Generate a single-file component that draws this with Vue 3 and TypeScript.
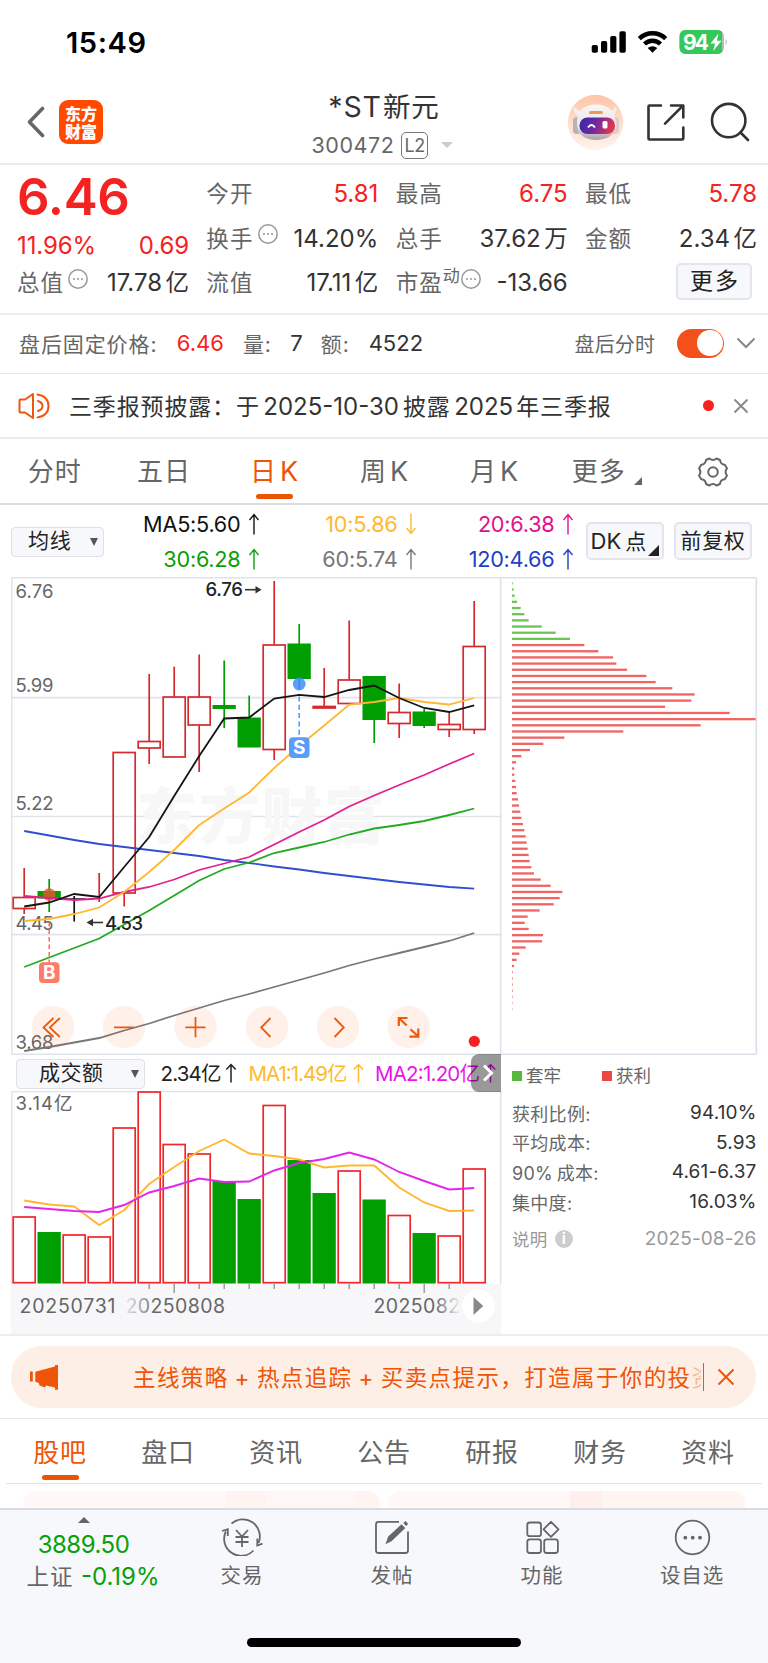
<script setup lang="ts">
interface Quote { label: string; value: string; unit?: string; up?: boolean; info?: boolean; sup?: string }
interface Candle { open: number; close: number; high: number; low: number; kind: 'up' | 'down' | 'flat' }

const columns: Quote[][] = [
  [
    { label: '今开', value: '5.81', up: true },
    { label: '换手', value: '14.20%', info: true },
    { label: '流值', value: '17.11', unit: '亿' },
  ],
  [
    { label: '最高', value: '6.75', up: true },
    { label: '总手', value: '37.62', unit: '万' },
    { label: '市盈', value: '-13.66', sup: '动', info: true },
  ],
  [
    { label: '最低', value: '5.78', up: true },
    { label: '金额', value: '2.34', unit: '亿' },
  ],
]

const averages = [
  { text: 'MA5:5.60', color: '#111', down: false },
  { text: '10:5.86', color: '#ffb92e', down: true },
  { text: '20:6.38', color: '#e0128a', down: false },
  { text: '30:6.28', color: '#09a009', down: false },
  { text: '60:5.74', color: '#777', down: false },
  { text: '120:4.66', color: '#2140c8', down: false },
]

const cx = (i: number): number => 24.2 + 25 * i

// Vertical pixel positions of each session inside the price pane.
const candles: Candle[] = [
  { open: 897.5, close: 908.5, high: 868, low: 914, kind: 'up' },
  { open: 891, close: 898.5, high: 879, low: 912, kind: 'down' },
  { open: 899, close: 899, high: 896, low: 921.5, kind: 'flat' },
  { open: 897, close: 897, high: 873, low: 902, kind: 'up' },
  { open: 752.5, close: 893, high: 752, low: 906.5, kind: 'up' },
  { open: 741.5, close: 748, high: 674, low: 764, kind: 'up' },
  { open: 697, close: 757, high: 666.7, low: 757, kind: 'up' },
  { open: 697, close: 725, high: 654.5, low: 772, kind: 'up' },
  { open: 705, close: 709, high: 660.5, low: 728, kind: 'down' },
  { open: 717.5, close: 747.5, high: 695.5, low: 747, kind: 'down' },
  { open: 645, close: 749.5, high: 581, low: 760, kind: 'up' },
  { open: 643.5, close: 679, high: 624, low: 689, kind: 'down' },
  { open: 706.5, close: 708, high: 668, low: 707, kind: 'up' },
  { open: 680, close: 703.5, high: 620.5, low: 703, kind: 'up' },
  { open: 676, close: 720, high: 676, low: 743, kind: 'down' },
  { open: 712.5, close: 723.5, high: 683.5, low: 738, kind: 'up' },
  { open: 711.5, close: 726, high: 709, low: 728, kind: 'down' },
  { open: 724.5, close: 729.5, high: 712, low: 737, kind: 'up' },
  { open: 646.5, close: 729.5, high: 601, low: 734, kind: 'up' },
]

const ink = { up: '#d42a2e', down: '#009e00', flat: '#111' }
const line = (ys: number[]): string => ys.map((y, i) => `${cx(i)},${y}`).join(' ')

const priceLines = [
  { color: '#777', ys: [1051, 1047, 1042.5, 1038, 1030.5, 1023.5, 1015.5, 1008, 1000.5, 994, 987, 980, 973, 965.5, 959, 953, 947, 941, 933] },
  { color: '#2f4fd0', ys: [831, 835.5, 840, 844, 847, 850, 853, 856, 860, 863, 866.5, 869.5, 873, 876, 879, 882, 884.5, 887, 888.7] },
  { color: '#22aa22', ys: [967, 957.5, 948, 938.5, 924.5, 910.5, 895.5, 880.5, 869, 862.5, 853, 847.5, 842, 834.5, 828.5, 825, 821, 815, 808.5] },
  { color: '#e0218f', ys: [896, 898, 900, 898.5, 892, 887, 879.5, 870, 863.5, 857, 844.5, 832, 820, 806.5, 795.5, 785, 775, 764, 753.5] },
  { color: '#ffb732', ys: [921, 919, 914, 907.5, 892, 872, 850, 825, 808.5, 792.5, 768, 746, 725.5, 704.5, 702, 698, 702, 704.5, 698] },
  { color: '#151515', ys: [906.5, 902.5, 894, 897, 867, 837, 796, 756, 718.5, 717.5, 698.5, 694.8, 697, 690, 685.5, 698, 708, 712, 705.3] },
]

const scale = [
  { t: '6.76', y: 598.3 }, { t: '5.99', y: 691.6 }, { t: '5.22', y: 810.4 }, { t: '4.45', y: 929.5 }, { t: '3.68', y: 1048.5 },
]

const volumes = [1217, 1232, 1235, 1237, 1128, 1092, 1144.5, 1154, 1181, 1199, 1105.5, 1160, 1193, 1171, 1199.5, 1215.5, 1233, 1236, 1169]
const falling = [1, 8, 9, 11, 12, 14, 16]
const volumeLines = [
  { color: '#ffb732', ys: [1200.5, 1204.5, 1206.5, 1225, 1210, 1184, 1167, 1151, 1139.5, 1153.5, 1156, 1159.5, 1167.5, 1165.5, 1165.5, 1187.5, 1202.5, 1211, 1210.5] },
  { color: '#e227ea', ys: [1207, 1209, 1211, 1212, 1205, 1192.5, 1186, 1178.5, 1182, 1181.5, 1170.5, 1163, 1159, 1152.5, 1159.5, 1172, 1181, 1189.5, 1188] },
]

const chips = [2, 5, 8, 15, 26, 37, 50, 89, 131, 174, 217, 259, 303, 313, 345, 403, 431, 481, 548, 538, 459, 653, 731, 566, 334, 157,
  94, 54, 28, 12, 7, 7, 10, 12, 14, 18, 21, 25, 28, 33, 37, 41, 44, 47, 50, 53, 58, 66, 86, 116, 151, 143, 125, 83, 47, 38, 50, 93, 90, 41,
  22, 14, 6, 2, 2, 2, 2, 1.6, 1.3, 1]

const stats = [
  { label: '获利比例:', value: '94.10%' },
  { label: '平均成本:', value: '5.93' },
  { label: '90%\u2009成本:', value: '4.61-6.37' },
  { label: '集中度:', value: '16.03%' },
]

const sections = ['股吧', '盘口', '资讯', '公告', '研报', '财务', '资料']
const tools = [53, 124, 195.5, 267, 338, 408.7]
</script>

<template>
  <div class="page">
    <div class="status">
      <span class="clock">15:49</span>
      <svg class="signals" width="134" height="28" viewBox="591 28 134 28">
        <rect x="591.7" y="45" width="6.2" height="7.8" rx="1.8" />
        <rect x="601" y="41" width="6.2" height="11.8" rx="1.8" />
        <rect x="610.2" y="36" width="6.2" height="16.8" rx="1.8" />
        <rect x="619.4" y="31.2" width="6.4" height="21.6" rx="1.8" />
        <g fill="none" stroke="#000" stroke-width="4.4">
          <path d="M639.3 38.6 A 19 19 0 0 1 665.7 38.6" />
          <path d="M644.5 44 A 11.6 11.6 0 0 1 660.500 44" />
        </g>
        <path d="M652.500 52.700 L647.700 48 Q652.500 44.300 657.300 48 Z" />
        <path d="M686 30 h31 q7 0 7 7 v10 q0 7 -7 7 h-31 q-6.500 0 -6.500 -7 v-10 q0 -7 6.500 -7z" fill="#b9b9b9" />
        <path d="M686 30 h31 q3 0 5 2 v20 q-2 2 -5 2 h-31 q-6.500 0 -6.500 -7 v-10 q0 -7 6.500 -7z" fill="#34c759" />
        <path d="M725.6 38.500 q2.600 3.500 0 7z" fill="#b9b9b9" />
        <text x="683" y="49.700" class="batt" textLength="26">94</text>
        <path d="M718.600 33.500 L710.400 43.600 h4.600 l-1.800 7.400 L721.600 40.700 h-4.800z" fill="#fff" />
      </svg>
    </div>

    <header class="head">
      <div class="head-left">
        <svg width="18" height="32" viewBox="0 0 18 32"><path d="M15.500 2.500 L2.500 16 L15.500 29.500" fill="none" stroke="#666" stroke-width="3.600" stroke-linecap="round" stroke-linejoin="round" /></svg>
        <div class="brand"><span>东方</span><span>财富</span></div>
      </div>
      <div class="title">
        <div class="name">*ST<span>新元</span></div>
        <div class="code">300472<em>L2</em><i></i></div>
      </div>
      <svg class="head-icons" width="202" height="58" viewBox="566 93 202 58">
        <defs>
          <linearGradient id="halo" x1="0" y1="0" x2="0" y2="1"><stop offset="0" stop-color="#ffc5a8" /><stop offset="1" stop-color="#fff4ee" /></linearGradient>
          <linearGradient id="visor" x1="0" y1="0" x2="1" y2="0.200"><stop offset="0" stop-color="#3227a8" /><stop offset=".55" stop-color="#74299f" /><stop offset="1" stop-color="#e2344f" /></linearGradient>
          <linearGradient id="shell" x1="0" y1="0" x2="0" y2="1"><stop offset="0" stop-color="#f8f6f6" /><stop offset=".6" stop-color="#ebe6e8" /><stop offset="1" stop-color="#aaa3a8" /></linearGradient>
        </defs>
        <circle cx="595.500" cy="122.500" r="27.700" fill="url(#halo)" />
        <path d="M574 106 q-2 7 4 10 l5 -5 q-6 0 -9 -5z M616 106 q2 7 -4 10 l-5 -5 q6 0 9 -5z" fill="#f3edec" />
        <rect x="573" y="117" width="8" height="17" rx="4" fill="#b9b1b6" />
        <rect x="611" y="117" width="8" height="17" rx="4" fill="#d9cdd0" />
        <path d="M577 125 C576 112 583 104.500 596 104.500 S616 112 616 125 C616 135 606 140 596 140 S577 135 577 125z" fill="url(#shell)" />
        <rect x="589" y="111" width="14" height="3" rx="1.500" fill="#eb9a55" />
        <rect x="579.500" y="117.500" width="35.500" height="16.500" rx="8" fill="url(#visor)" />
        <path d="M588 127.500 q3.500 -5 7 0" stroke="#fff" stroke-width="1.800" fill="none" />
        <rect x="602.500" y="121" width="5" height="7.500" rx="1.500" fill="#fff" />
        <g fill="none" stroke="#333" stroke-width="2.600" stroke-linecap="round" stroke-linejoin="round">
          <path d="M661 105.500 H649.500 Q648.500 105.500 648.500 106.500 V138.500 Q648.500 139.500 649.500 139.500 H682 Q683.300 139.500 683.300 138.500 V127.500" />
          <path d="M671 105.500 H683.300 V117.500 M683 105.700 L665 123.700" />
          <circle cx="728.700" cy="120.600" r="16.700" />
          <path d="M740.500 132.500 L748 140" />
        </g>
      </svg>
    </header>

    <section class="quote">
      <div class="qcol first">
        <div class="price">6.46</div>
        <div class="change"><span>11.96%</span><span>0.69</span></div>
        <div class="qrow">
          <span class="lab">总值</span>
          <svg class="dots" width="20" height="20" viewBox="0 0 20 20"><circle cx="10" cy="10" r="9.200" /><path d="M5 10h2M9 10h2M13 10h2" /></svg>
          <span class="val">17.78<b>亿</b></span>
        </div>
      </div>
      <div v-for="(col, c) in columns" :key="c" class="qcol">
        <div v-for="q in col" :key="q.label" class="qrow">
          <span class="lab">{{ q.label }}</span>
          <sup v-if="q.sup">{{ q.sup }}</sup>
          <svg v-if="q.info" class="dots" :class="{ tight: q.sup }" width="20" height="20" viewBox="0 0 20 20"><circle cx="10" cy="10" r="9.200" /><path d="M5 10h2M9 10h2M13 10h2" /></svg>
          <span class="val" :class="{ red: q.up }">{{ q.value }}<b v-if="q.unit">{{ q.unit }}</b></span>
        </div>
        <button v-if="c === 2" class="more">更多</button>
      </div>
    </section>

    <section class="after">
      <span class="a-lab">盘后固定价格:</span><span class="a-val red p">6.46</span>
      <span class="a-lab">量:</span><span class="a-val v">7</span>
      <span class="a-lab">额:</span><span class="a-val m">4522</span>
      <span class="a-time">盘后分时</span>
      <span class="toggle"></span>
      <svg width="20" height="12" viewBox="0 0 20 12"><path d="M1.500 1.500 L10 10 L18.500 1.500" fill="none" stroke="#888" stroke-width="2" /></svg>
    </section>

    <section class="notice">
      <svg width="32" height="28" viewBox="0 0 32 28" fill="none" stroke="#f0560c" stroke-width="2" stroke-linejoin="round" stroke-linecap="round">
        <path d="M15 2 V26 L7 20.500 H2.500 Q1.500 20.500 1.500 19.500 V8.500 Q1.500 7.500 2.500 7.500 H7 Z" />
        <path d="M20 9 Q24.500 10.500 24.500 14 T20 19 M19.500 2.500 Q30.500 4.500 30.500 14 T19.500 25.500" />
      </svg>
      <p>三季报预披露：<span class="sp">于</span><i>2025-10-30</i><span>披露</span><i class="yr">2025</i><span>年三季报</span></p>
      <span class="dot"></span>
      <svg width="16" height="16" viewBox="0 0 16 16"><path d="M1.500 1.500 L14.500 14.500 M14.500 1.500 L1.500 14.500" stroke="#888" stroke-width="1.900" /></svg>
    </section>

    <nav class="periods">
      <span>分时</span><span>五日</span><span class="on">日<i>K</i></span><span>周<i>K</i></span><span>月<i>K</i></span>
      <span class="drop">更多</span>
      <svg width="32" height="32" viewBox="-16 -16 32 32" fill="none" stroke="#666" stroke-width="2">
        <path stroke-linejoin="round" d="M-3.500 -13.500 Q0 -10.500 3.500 -13.500 L7 -12 Q7.500 -7.500 11.800 -7.300 L14 -3.600 Q11.200 0 14 3.600 L11.800 7.300 Q7.500 7.500 7 12 L3.500 13.500 Q0 10.500 -3.500 13.500 L-7 12 Q-7.500 7.500 -11.800 7.300 L-14 3.600 Q-11.200 0 -14 -3.600 L-11.800 -7.300 Q-7.500 -7.500 -7 -12 Z" />
        <circle r="4.800" />
      </svg>
    </nav>

    <section class="indicators">
      <div class="pick">均线<i></i></div>
      <div class="mas">
        <span v-for="m in averages" :key="m.text" :style="{ color: m.color }">{{ m.text }}<svg width="10" height="22" viewBox="0 0 10 22" :class="{ flip: m.down }"><path d="M5 21.500 V1.500 M0.500 7 L5 1.500 L9.500 7" fill="none" stroke="currentColor" stroke-width="1.400" /></svg></span>
      </div>
      <button class="dk">DK<b>点</b></button>
      <button class="fq">前复权</button>
    </section>

    <section class="board">
      <div class="left">
        <svg class="pane" width="491" height="478" viewBox="11 577 491 478">
          <g stroke="#e2e3ea" stroke-width="1.600">
            <path d="M11 577.700 H502 M11 697.600 H502 M11 816.500 H502 M11 934.600 H502 M11 1054.200 H502" />
            <path d="M11.700 577 V1055 M500.700 577 V1055" />
          </g>
          <text x="136" y="839" class="mark" textLength="249">东方财富</text>
          <text v-for="s in scale" :key="s.t" x="15.500" :y="s.y" class="tick" textLength="38">{{ s.t }}</text>
          <g v-for="(k, i) in candles" :key="i" :stroke="ink[k.kind]" stroke-width="1.700" fill="none">
            <template v-if="k.kind === 'up'">
              <path :d="`M${cx(i)} ${k.high} V${k.open} M${cx(i)} ${k.close} V${k.low}`" />
              <rect :x="cx(i) - 11" :y="k.open" width="22" :height="k.close - k.open" />
            </template>
            <template v-else-if="k.kind === 'down'">
              <path :d="`M${cx(i)} ${k.high} V${k.low}`" />
              <rect :x="cx(i) - 11.700" :y="k.open" width="23.300" :height="k.close - k.open" fill="#009e00" stroke="none" />
            </template>
            <path v-else :d="`M${cx(i)} ${k.high} V${k.low} M${cx(i) - 11.500} 899 h23`" />
          </g>
          <circle cx="299.200" cy="684" r="6.400" fill="#3f8cff" fill-opacity=".85" />
          <circle cx="49.200" cy="894.500" r="6.300" fill="#e8542a" fill-opacity=".8" />
          <polyline v-for="l in priceLines" :key="l.color" :points="line(l.ys)" fill="none" :stroke="l.color" stroke-width="1.800" />
          <path d="M299.200 696.500 V738" stroke="#5a9cff" stroke-width="1.700" stroke-dasharray="5 3.300" />
          <path d="M49.200 922 V962" stroke="#ff6a5a" stroke-width="1.500" stroke-dasharray="4.500 3" />
          <rect x="289" y="737.300" width="20.500" height="20.700" rx="4" fill="#5a9cfa" />
          <text x="299.200" y="754.300" class="badge">S</text>
          <rect x="39" y="962.300" width="20.500" height="20.700" rx="4" fill="#ff7b69" />
          <text x="49.300" y="979.400" class="badge">B</text>
          <text x="205.500" y="596.300" class="peak" textLength="37.500">6.76</text>
          <path d="M245 589.700 h13" stroke="#333" stroke-width="1.600" /><path d="M255.500 586 l6 3.700 l-6 3.700z" fill="#333" />
          <text x="105" y="929.800" class="peak" textLength="38">4.53</text>
          <path d="M90 922.500 h13" stroke="#333" stroke-width="1.600" /><path d="M93 918.800 l-6.500 3.700 l6.500 3.700z" fill="#333" />
          <circle v-for="x in tools" :key="x" :cx="x" cy="1027" r="21.200" fill="#fb5a10" fill-opacity=".09" />
          <g fill="none" stroke="#ee5a0c" stroke-width="1.800">
            <path d="M53.500 1018 L43.500 1027.500 L53.500 1037 M59.800 1018 L49.800 1027.500 L59.800 1037" />
            <path d="M114 1027.300 H134 M185.300 1027.300 H205.500 M195.500 1017 V1037.300" />
            <path d="M270.500 1018 L261.200 1027.500 L270.500 1037 M334.500 1018 L343.800 1027.500 L334.500 1037" />
            <path d="M398.800 1026 V1018 H407.500 M399 1018.300 L406.800 1025.500 M418.300 1028.500 V1036.700 H409.500 M418.300 1036.500 L410.500 1029.300" stroke-width="2.200" />
          </g>
          <circle cx="474.300" cy="1041.300" r="5.600" fill="#f52222" />
        </svg>

        <div class="vol-head">
          <div class="pick wide">成交额<i></i></div>
          <svg width="340" height="36" viewBox="160 1055 340 36" class="vol-info">
            <text x="160.500" y="1081" fill="#222" textLength="61">2.34亿</text>
            <text x="248.500" y="1081" fill="#ffb92e" textLength="99">MA1:1.49亿</text>
            <text x="375" y="1081" fill="#e814e8" textLength="105">MA2:1.20亿</text>
            <g fill="none" stroke-width="1.500">
              <path d="M231 1082.500 V1064.500 M226.300 1069.500 L231 1064.500 L235.700 1069.500" stroke="#222" />
              <path d="M358.500 1082.500 V1064.500 M353.800 1069.500 L358.500 1064.500 L363.200 1069.500" stroke="#ffb92e" />
              <path d="M490.500 1082.500 V1064.500 M485.800 1069.500 L490.500 1064.500 L495.200 1069.500" stroke="#e814e8" />
            </g>
          </svg>
          <div class="fold"><svg width="12" height="20" viewBox="0 0 12 20"><path d="M2 2.500 L9.500 10 L2 17.500" fill="none" stroke="#fff" stroke-width="3" /></svg></div>
        </div>

        <svg class="pane" width="491" height="193" viewBox="11 1091 491 193">
          <path d="M11 1091.500 H502 M11.700 1091 V1284 M500.700 1091 V1284" stroke="#e2e3ea" stroke-width="1.600" />
          <text x="15.500" y="1110.300" class="tick" textLength="57">3.14亿</text>
          <g v-for="(v, i) in volumes" :key="i">
            <rect v-if="falling.includes(i)" :x="cx(i) - 11.700" :y="v" width="23.300" :height="1283.500 - v" fill="#009e00" />
            <rect v-else :x="cx(i) - 11" :y="v" width="22" :height="1282.700 - v" fill="none" stroke="#f2262a" stroke-width="1.700" />
          </g>
          <polyline v-for="l in volumeLines" :key="l.color" :points="line(l.ys)" fill="none" :stroke="l.color" stroke-width="1.900" />
        </svg>

        <div class="dates">
          <svg width="490" height="50" viewBox="11 1284 490 50">
            <defs>
              <linearGradient id="in"><stop offset="0" stop-color="#666" stop-opacity=".1" /><stop offset=".3" stop-color="#666" /></linearGradient>
              <linearGradient id="out"><stop offset=".62" stop-color="#666" /><stop offset=".85" stop-color="#666" stop-opacity=".15" /></linearGradient>
            </defs>
            <path v-for="i in 13" :key="i" :d="`M${cx(i + 4)} 1284 v${i === 2 || i === 12 ? 9 : 5}`" stroke="#888" stroke-width="1.200" />
            <text x="19.500" y="1312.500" fill="#666" textLength="96">20250731</text>
            <text x="125.500" y="1312.500" fill="url(#in)" textLength="99.500">20250808</text>
            <text x="373.500" y="1312.500" fill="url(#out)" textLength="99">20250825</text>
            <circle cx="478.500" cy="1306" r="16.500" fill="#fff" />
            <path d="M473.500 1297 L483.200 1306 L473.500 1315z" fill="#888" />
          </svg>
        </div>
      </div>

      <div class="right">
        <svg class="pane" width="256" height="478" viewBox="502 577 256 478">
          <path d="M502 577.700 H756.300 V1054.400 H502" fill="none" stroke="#dedfe8" stroke-width="1.600" />
          <rect v-for="(w, i) in chips" :key="i" x="512" :y="582.200 + 6.172 * i" :width="w / 3" height="2.300" :fill="i < 10 ? '#6cc455' : '#f06464'" />
        </svg>
        <div class="legend"><span>套牢</span><span class="gain">获利</span></div>
        <dl class="stats">
          <div v-for="s in stats" :key="s.label"><dt>{{ s.label }}</dt><dd>{{ s.value }}</dd></div>
          <div class="tip"><dt>说明<em>i</em></dt><dd>2025-08-26</dd></div>
        </dl>
      </div>
    </section>

    <section class="promo">
      <div class="pill">
        <svg width="30" height="26" viewBox="29 1364 30 26" fill="#ee5507"><rect x="30" y="1371.500" width="2.800" height="10" /><path d="M35.300 1371.800 L55 1366.500 V1365 H58 V1389.700 H55 V1387.500 L46 1385.500 L45 1387.500 L39.500 1385.500 L38.800 1383 L35.300 1381.800z" /></svg>
        <p>主线策略<i>+</i>热点追踪<i>+</i>买卖点提示，打造属于你的投<u>资</u></p>
        <span class="bar"></span>
        <svg width="18" height="18" viewBox="0 0 18 18"><path d="M1.500 1.500 L16.500 16.500 M16.500 1.500 L1.500 16.500" stroke="#ee5507" stroke-width="1.900" /></svg>
      </div>
    </section>

    <nav class="sections"><span v-for="(s, i) in sections" :key="s" :class="{ on: i === 0 }">{{ s }}</span></nav>

    <div class="peek"><span></span><span class="alt"></span></div>

    <footer class="bottom">
      <div class="index">
        <i></i>
        <strong>3889.50</strong>
        <p>上证<span>-0.19%</span></p>
      </div>
      <div class="act">
        <svg width="42" height="38" viewBox="221 1518 42 38"><path d="M231.500 1523.700 A17 17 0 0 1 258.500 1543 M253.500 1550.500 A17 17 0 0 1 225.800 1531.500 M222 1531 L227.800 1529.300 V1536 M262.500 1543.600 L257.300 1545.500 V1538.500" /><path d="M236 1530 L242 1536.500 L248 1530 M242 1536.500 V1547 M235.500 1537 H248.500 M235.500 1542 H248.500" /></svg>
        <span>交易</span>
      </div>
      <div class="act">
        <svg width="42" height="38" viewBox="371 1518 42 38"><path d="M399 1521.800 H378.500 Q376 1521.800 376 1524.300 V1550.500 Q376 1553 378.500 1553 H405.500 Q408 1553 408 1550.500 V1531.500" /><path d="M387 1542.500 L389 1537 L401.500 1525.500 L404 1528 L391 1540.500z" fill="#666" /><path d="M404.700 1524.500 L406.800 1522.500" stroke-width="4" /></svg>
        <span>发帖</span>
      </div>
      <div class="act">
        <svg width="42" height="38" viewBox="521 1518 42 38"><rect x="527.300" y="1522.500" width="13.700" height="13.700" rx="2.500" /><rect x="527.300" y="1539.300" width="13.700" height="13.700" rx="2.500" /><rect x="544.200" y="1539.300" width="13.700" height="13.700" rx="2.500" /><path d="M551 1521.800 L558.500 1529.300 L551 1536.800 L543.500 1529.300z" stroke-linejoin="round" /></svg>
        <span>功能</span>
      </div>
      <div class="act">
        <svg width="42" height="38" viewBox="671 1518 42 38"><circle cx="692.500" cy="1537.500" r="16.800" /><g fill="#666" stroke="none"><circle cx="685.300" cy="1537.700" r="1.900" /><circle cx="692.700" cy="1537.700" r="1.900" /><circle cx="700" cy="1537.700" r="1.900" /></g></svg>
        <span>设自选</span>
      </div>
      <div class="home"></div>
    </footer>
  </div>
</template>

<style>
html, body { background: #fff; }
</style>

<style scoped>
.page { width: 768px; height: 1663px; overflow: hidden; display: flex; flex-direction: column; background: #fff; color: #333; font-family: Inter, "Noto Sans CJK SC", sans-serif; }
.page * { box-sizing: border-box; }
.page > * { flex: none; }
svg { display: block; flex: none; }
p, dl, dd { margin: 0; }
i, em { font-style: normal; }
u { text-decoration: none; }
b, button, strong { font-weight: 400; }
button { font-family: inherit; border: 2px solid #e4e5eb; background: #f7f8fb; border-radius: 5px; color: #222; padding: 0; text-align: center; white-space: nowrap; }
.red { color: #f52222 !important; }

.status { height: 84px; display: flex; align-items: flex-start; justify-content: space-between; padding: 28px 43px 0 66px; }
.clock { font-size: 29px; font-weight: 600; line-height: 29px; color: #000; letter-spacing: 0.600px; }
.signals { overflow: visible; }
.batt { font: 700 21px Inter, sans-serif; fill: #fff; }

.head { height: 81px; border-bottom: 2px solid #ececee; display: grid; grid-template-columns: 1fr auto 1fr; }
.head-left { display: flex; align-items: center; padding: 0 0 2px 27px; gap: 14px; height: 78px; }
.brand { width: 44px; height: 44px; border-radius: 9px; background: #ff4a00; color: #fff; font: 900 16px/18px "Noto Sans CJK SC", sans-serif; display: flex; flex-direction: column; align-items: center; padding-top: 4px; }
.title { text-align: center; padding-top: 5px; color: #333; }
.name { font-size: 28.500px; line-height: 36px; height: 36px; white-space: nowrap; letter-spacing: 0.900px; }
.name span { font-size: 27.500px; margin-left: 1px; }
.code { display: flex; align-items: center; justify-content: center; color: #666; font-size: 21.500px; line-height: 28px; height: 28px; margin: 6px 4px 0 0; letter-spacing: 0.600px; }
.code em { width: 27px; height: 27px; border: 1.500px solid #777; border-radius: 5px; font-size: 18px; line-height: 25px; margin-left: 6.500px; letter-spacing: -0.500px; }
.code i { border: 6.500px solid transparent; border-top-color: #ccc; border-bottom: 0; margin-left: 12.500px; }
.head-icons { justify-self: end; margin-top: 9px; }

.quote { height: 150px; border-bottom: 2px solid #ededf0; display: grid; grid-template-columns: repeat(4, 171px); column-gap: 18.330px; padding: 7px 12px 0 17px; }
.qcol { display: flex; flex-direction: column; }
.qrow { height: 44.500px; display: flex; align-items: center; font-size: 24px; line-height: 30px; }
.lab { color: #666; font-size: 22.500px; letter-spacing: 1.100px; white-space: nowrap; }
.dots { margin: -9px 0 0 4px; fill: none; stroke: #999; stroke-width: 1.500; }
.dots.tight { margin-left: 1px; }
sup { font-size: 17px; line-height: 20px; color: #666; margin: -14px 0 0 0; vertical-align: baseline; }
.val { margin: 0 -1px 0 auto; color: #333; white-space: nowrap; letter-spacing: 0; }
.val b { font-size: 23.500px; margin-left: 3.500px; }
.price { font-size: 51px; font-weight: 600; line-height: 50px; height: 58px; color: #f52222; letter-spacing: -0.300px; }
.change { height: 31px; display: flex; justify-content: space-between; font-size: 24px; line-height: 31px; color: #f52222; letter-spacing: -0.100px; }
.first .qrow { height: 44px; }
.change { margin-right: -1px; }
.more { width: 76px; height: 37px; align-self: flex-end; font-size: 23px; line-height: 33px; letter-spacing: 2px; text-indent: 2px; margin: 2px 4px 0 0; }

.after { height: 59px; border-bottom: 1.500px solid #e6e6ea; display: flex; align-items: center; padding: 0 12px 2px 19px; font-size: 21px; white-space: nowrap; }
.a-lab { color: #666; letter-spacing: 0.900px; }
.a-val { font-size: 22px; }
.a-val.p { margin: 0 19px 0 19.500px; }
.a-val.v { margin: 0 18px 0 18.500px; }
.a-val.m { margin-left: 19px; }
.a-time { margin-left: auto; color: #666; font-size: 20px; letter-spacing: 0.100px; }
.toggle { width: 47px; height: 29px; border-radius: 15px; background: #f4511a; margin: 0 12px 0 22px; display: flex; justify-content: flex-end; align-items: center; padding-right: 1.500px; }
.toggle::after { content: ""; width: 25.500px; height: 25.500px; border-radius: 50%; background: #fff; }

.notice { height: 65px; border-bottom: 2px solid #ececee; display: flex; align-items: center; padding: 0 19px 0 18px; font-size: 23px; }
.notice p { margin: -2px 0 0 19px; white-space: nowrap; color: #333; letter-spacing: 0.850px; }
.notice p i { font-size: 24px; letter-spacing: 0; margin: 0 4px 0 3.500px; }
.notice p .yr { margin-right: 3px; }
.dot { width: 11px; height: 11px; border-radius: 50%; background: #f52222; margin: 0 19px 0 auto; }

.periods { height: 66px; border-bottom: 2px solid #dcdde4; display: flex; position: relative; align-items: center; font-size: 26px; color: #666; padding-left: 0.500px; }
.periods span { width: 110px; text-align: center; white-space: nowrap; letter-spacing: 1px; height: 64px; line-height: 66px; position: relative; }
.periods span:first-child { width: 108.500px; }
.periods i { margin-left: 3px; letter-spacing: 0; font-size: 27px; }
.periods .on, .sections .on { color: #ee5507; }
.on::after { content: ""; position: absolute; width: 37px; height: 5.500px; border-radius: 3px; background: #ea5504; left: 50%; margin-left: -18.500px; bottom: 4px; }
.periods .drop { width: 99.500px; }
.drop::after { content: ""; position: absolute; right: 7px; bottom: 18px; border-left: 8px solid transparent; border-bottom: 8px solid #666; }
.periods svg { margin: 1px 0 0 48px; }

.indicators { height: 72px; display: flex; padding-left: 11px; }
.pick { width: 93px; height: 30px; border: 1.500px solid #dfe0e8; border-radius: 4px; background: #f7f8fb; color: #222; font-size: 21px; line-height: 26px; letter-spacing: 0.800px; padding-left: 16px; margin-top: 21.500px; position: relative; }
.pick i { position: absolute; right: 5px; top: 10px; border: 4.200px solid transparent; border-top: 8px solid #555; border-bottom: 0; }
.mas { display: grid; grid-template-columns: 154.500px 157px 157px; grid-auto-rows: 35px; padding-top: 1.500px; font-size: 21.700px; font-weight: 370; }
.mas span { display: flex; align-items: center; justify-content: flex-end; line-height: 35px; letter-spacing: -0.250px; white-space: nowrap; }
.mas svg { margin-left: 8px; }
.flip { transform: rotate(180deg); }
.dk, .fq { height: 38px; width: 78px; margin-top: 17px; font-size: 22px; line-height: 34px; letter-spacing: 0; }
.dk { margin-left: 13px; position: relative; text-align: left; padding-left: 3px; }
.dk b { font-size: 21px; margin-left: 4px; }
.dk::after { content: ""; position: absolute; right: 3px; bottom: 2px; border-left: 11px solid transparent; border-bottom: 11px solid #222; }
.fq { margin-left: 10.500px; font-size: 21px; letter-spacing: 0.600px; }

.board { height: 759px; display: flex; padding-left: 11px; border-bottom: 2px solid #ededf0; }
.left { width: 491px; }
.mark { font: 900 61px "Noto Sans CJK SC", sans-serif; fill: #f7f7f8; }
.tick { font-size: 18.500px; fill: #666; }
.peak { font-size: 18.500px; font-weight: 500; fill: #222; }
.badge { font-size: 19px; font-weight: 700; fill: #fff; text-anchor: middle; }
.vol-head { height: 36px; display: flex; position: relative; padding-left: 5px; }
.pick.wide { width: 129px; margin-top: 4px; padding-left: 22px; letter-spacing: 0.500px; }
.vol-info { margin-left: 15px; font-size: 20.500px; font-weight: 370; }
.fold { position: absolute; left: 460px; top: -1px; width: 30px; height: 38px; border-radius: 8px 0 0 8px; background: rgba(0, 0, 0, .4); display: flex; align-items: center; padding-left: 11px; }
.dates { width: 490px; height: 50px; background: #f7f7fa; font-size: 19.500px; }
.right { width: 256px; }
.legend { display: flex; padding: 8px 0 0 10px; color: #666; font-size: 17.500px; line-height: 26px; }
.legend span { display: flex; align-items: center; width: 90px; }
.legend span::before { content: ""; width: 9.500px; height: 9.500px; background: #56b83c; margin-right: 4.500px; }
.legend .gain::before { background: #ec4646; }
.stats { padding: 9px 1.500px 0 10px; font-size: 18px; }
.stats div { height: 29.600px; display: flex; align-items: center; justify-content: space-between; }
.stats dt { color: #666; letter-spacing: 0.300px; }
.stats dd { color: #333; font-size: 19px; letter-spacing: 0.150px; }
.stats .tip { height: 45px; }
.tip dt { display: flex; align-items: center; color: #999; font-size: 17.500px; }
.tip dd { color: #999; letter-spacing: 0.100px; }
.tip em { width: 18.500px; height: 18.500px; border-radius: 50%; background: #ccc; color: #fff; font-size: 15px; font-weight: 700; line-height: 18.500px; text-align: center; margin-left: 7px; }

.promo { height: 83px; border-bottom: 1.500px solid #e6e7ec; padding: 10px 12px 0 11px; }
.pill { height: 62px; border-radius: 31px; background: #fdeee6; color: #ee5507; display: flex; align-items: center; padding: 0 21px 0 18px; font-size: 22.500px; }
.pill p { margin: -2px 0 0 74px; width: 568px; overflow: hidden; white-space: nowrap; letter-spacing: 1.400px; }
.pill i { margin: 0 6px; }
.pill u { opacity: .35; }
.bar { width: 1px; height: 28px; background: #ee5507; margin-left: 2px; }
.pill .bar + svg { margin-left: auto; }

.sections { height: 65px; display: flex; margin: 0 6px; border-bottom: 1.500px solid #e3e4ea; font-size: 26px; color: #666; }
.sections span { width: 108.150px; text-align: center; line-height: 67px; letter-spacing: 0.800px; position: relative; }
.sections .on::after { bottom: 3px; }
.peek { height: 24px; display: flex; gap: 8px; padding: 7px 23px 0; overflow: hidden; }
.peek span { flex: 1; height: 40px; border-radius: 12px; background: linear-gradient(90deg, #fff8f6 57%, #fff4f1 57% 68%, #fff7f5 68% 93%, #fff4f1 93%); }
.peek .alt { background: linear-gradient(90deg, #fff8f6 51%, #fff0ed 51% 60%, #fff5f3 60%); }

.bottom { height: 155px; background: #f7f8fb; border-top: 2px solid #d8dbe2; display: flex; position: relative; }
.index { width: 167px; display: flex; flex-direction: column; align-items: center; color: #0aa00a; }
.index > i { border: 6px solid transparent; border-bottom-color: #666; border-top: 0; margin-top: 7px; }
.index strong { font-size: 24px; line-height: 30px; margin-top: 7px; letter-spacing: -0.500px; }
.index p { font-size: 22.500px; line-height: 34px; margin: 0 0 0 19px; color: #666; letter-spacing: 1px; white-space: nowrap; }
.index span { font-size: 24px; color: #0aa00a; letter-spacing: 0; margin-left: 7.500px; }
.act { width: 150px; display: flex; flex-direction: column; align-items: center; color: #666; font-size: 20.500px; padding-top: 8px; }
.act svg { fill: none; stroke: #666; stroke-width: 1.800; }
.act span { line-height: 30px; margin-top: 4.500px; letter-spacing: 0.900px; white-space: nowrap; }
.home { position: absolute; left: 247px; top: 128px; width: 274px; height: 9px; border-radius: 5px; background: #000; }
</style>
